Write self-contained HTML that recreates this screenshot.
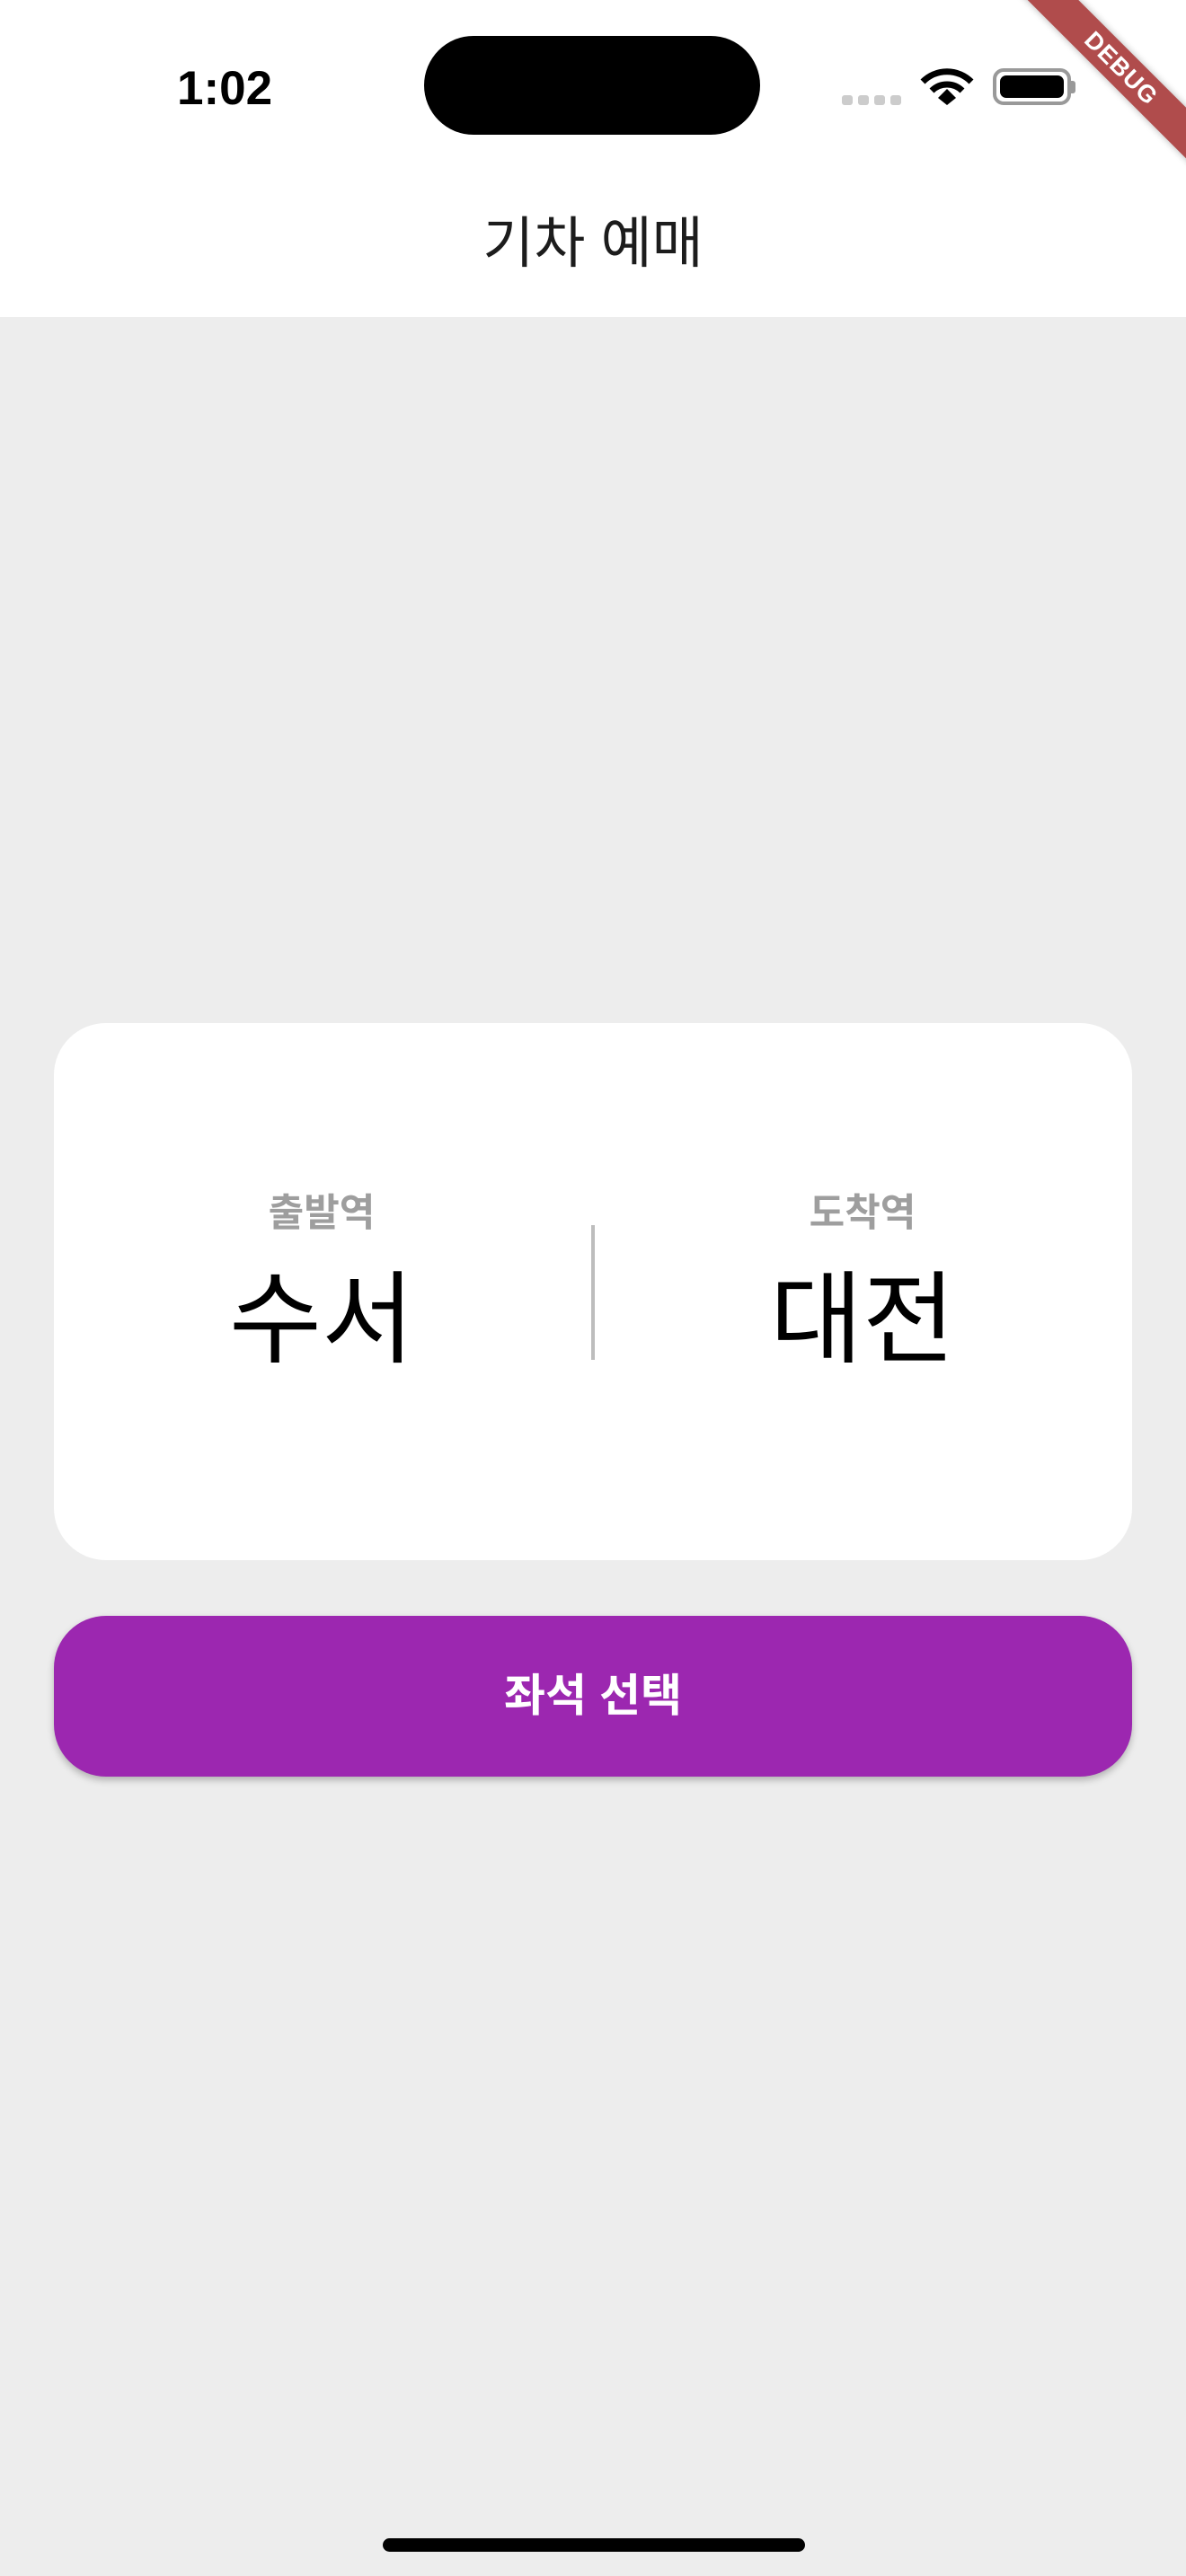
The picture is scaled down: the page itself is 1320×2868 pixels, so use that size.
<!DOCTYPE html>
<html><head><meta charset="utf-8"><style>
*{margin:0;padding:0;box-sizing:border-box}
body{width:1320px;height:2868px;background:#ededed;position:relative;overflow:hidden;font-family:"Liberation Sans","Noto Sans CJK KR",sans-serif}
.hdr{position:absolute;left:0;top:0;width:1320px;height:353px;background:#fff}
.abs{position:absolute}
.c{text-align:center}
</style></head><body>
<div class="hdr"></div>
<div class="abs" style="left:197px;top:68px;font-size:53px;font-weight:bold;color:#000">1:02</div>
<div class="abs" style="left:472px;top:40px;width:374px;height:110px;border-radius:55px;background:#000"></div>
<div class="abs" style="left:937px;top:106px;width:12px;height:11px;border-radius:3px;background:#ccc"></div>
<div class="abs" style="left:955px;top:106px;width:12px;height:11px;border-radius:3px;background:#ccc"></div>
<div class="abs" style="left:973px;top:106px;width:12px;height:11px;border-radius:3px;background:#ccc"></div>
<div class="abs" style="left:991px;top:106px;width:12px;height:11px;border-radius:3px;background:#ccc"></div>
<svg class="abs" style="left:1024px;top:74px" width="60" height="44" viewBox="0 0 60 44">
<path d="M3 17 A38 38 0 0 1 57 17" stroke="#000" stroke-width="7" fill="none"/>
<path d="M13 27 A24 24 0 0 1 47 27" stroke="#000" stroke-width="7" fill="none"/>
<path d="M20 35 L30 25 L40 35 L30 43 Z" fill="#000"/></svg>
<div class="abs" style="left:1105px;top:76px;width:87px;height:41px;border:4px solid #999;border-radius:12px;padding:4px"><div style="width:100%;height:100%;background:#000;border-radius:7px"></div></div>
<div class="abs" style="left:1192px;top:90px;width:5px;height:14px;background:#999;border-radius:0 3px 3px 0"></div>
<div class="abs" style="left:1088px;top:56px;width:320px;height:40px;background:#b04c4c;transform:rotate(45deg);transform-origin:center;color:#fff;font-weight:bold;font-size:27px;line-height:40px;text-align:center;letter-spacing:1px;box-shadow:0 0 8px rgba(0,0,0,.3)">DEBUG</div>
<div class="abs c" style="left:0;width:1320px;top:234px;font-size:62px;color:#1c1c1c;line-height:76px">기차 예매</div>
<div class="abs" style="left:60px;top:1139px;width:1200px;height:598px;background:#fff;border-radius:58px"></div>
<div class="abs c" style="left:208px;width:300px;top:1322px;font-size:43px;color:#9e9e9e;font-weight:bold;line-height:58px">출발역</div>
<div class="abs c" style="left:158px;width:400px;top:1400px;font-size:112px;color:#000;line-height:140px">수서</div>
<div class="abs c" style="left:810px;width:300px;top:1322px;font-size:43px;color:#9e9e9e;font-weight:bold;line-height:58px">도착역</div>
<div class="abs c" style="left:760px;width:400px;top:1400px;font-size:112px;color:#000;line-height:140px">대전</div>
<div class="abs" style="left:658px;top:1364px;width:4px;height:150px;background:#bdbdbd"></div>
<div class="abs c" style="left:60px;top:1799px;width:1200px;height:179px;background:#9c27b0;border-radius:58px;color:#fff;font-size:50px;font-weight:bold;line-height:179px;box-shadow:0 4px 8px rgba(0,0,0,.25)">좌석 선택</div>
<div class="abs" style="left:426px;top:2826px;width:470px;height:15px;border-radius:8px;background:#000"></div>
</body></html>
